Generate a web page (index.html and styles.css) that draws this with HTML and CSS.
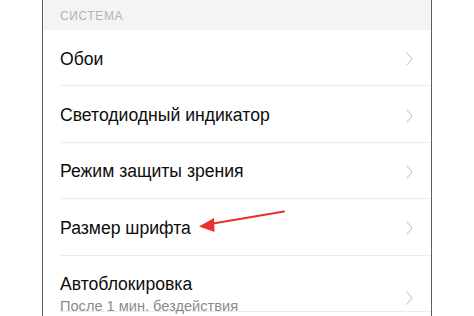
FILE: index.html
```html
<!DOCTYPE html>
<html lang="ru">
<head>
<meta charset="utf-8">
<link rel="stylesheet" href="styles.css">
</head>
<body>
<div class="phone">
  <div class="section">СИСТЕМА</div>
  <div class="row"><span class="title">Обои</span><svg class="chev" viewBox="0 0 7 14"><path d="M0.5 0.5 L6 7 L0.5 13.5"/></svg></div>
  <div class="row"><span class="title">Светодиодный индикатор</span><svg class="chev" viewBox="0 0 7 14"><path d="M0.5 0.5 L6 7 L0.5 13.5"/></svg></div>
  <div class="row"><span class="title">Режим защиты зрения</span><svg class="chev" viewBox="0 0 7 14"><path d="M0.5 0.5 L6 7 L0.5 13.5"/></svg></div>
  <div class="row"><span class="title">Размер шрифта</span><svg class="chev" viewBox="0 0 7 14"><path d="M0.5 0.5 L6 7 L0.5 13.5"/></svg></div>
  <div class="row two"><div class="texts"><span class="title">Автоблокировка</span><span class="sub">После 1 мин. бездействия</span></div><svg class="chev" viewBox="0 0 7 14"><path d="M0.5 0.5 L6 7 L0.5 13.5"/></svg></div>
  <svg class="arrow" viewBox="0 0 474 316" width="474" height="316">
    <line x1="284" y1="211.5" x2="210" y2="224" />
    <polygon points="199,226.5 214,218 214.5,232" />
  </svg>
</div>
</body>
</html>
```

FILE: styles.css
```css
html, body {
  margin: 0;
  padding: 0;
  background: #ffffff;
}
body {
  width: 474px;
  height: 316px;
  overflow: hidden;
  font-family: "Liberation Sans", Arial, sans-serif;
}
.phone {
  margin-left: 42px;
  width: 388px;
  height: 316px;
  border-left: 1.5px solid #5e5e5e;
  border-right: 1.5px solid #5e5e5e;
  display: flex;
  flex-direction: column;
  overflow: hidden;
}
.section {
  flex: 0 0 30px;
  height: 30px;
  box-sizing: border-box;
  background: #f4f4f4;
  color: #b3b3b3;
  font-size: 12px;
  letter-spacing: 0.6px;
  padding-left: 17px;
  display: flex;
  align-items: center;
  padding-top: 1px;
}
.row {
  flex: 0 0 56.4px;
  height: 56.4px;
  box-sizing: border-box;
  margin-left: 17px;
  padding-right: 17px;
  border-bottom: 1px solid #ececec;
  display: flex;
  align-items: center;
  justify-content: space-between;
  padding-top: 3px;
}
.title {
  font-size: 17.6px;
  color: #0d0d0d;
}
.row.two {
  align-items: flex-start;
  padding-top: 18px;
}
.row.two .chev {
  margin-top: 17px;
}
.texts {
  display: flex;
  flex-direction: column;
}
.sub {
  font-size: 14.6px;
  color: #8a8a8a;
  margin-top: 3px;
}
.chev {
  width: 7px;
  height: 14px;
  fill: none;
  stroke: #c9c9c9;
  stroke-width: 1.1;
  margin-right: 1px;
}
.arrow {
  position: absolute;
  left: 0;
  top: 0;
  pointer-events: none;
}
.arrow line {
  stroke: #e8322b;
  stroke-width: 2;
  stroke-linecap: round;
}
.arrow polygon {
  fill: #e8322b;
}
```
